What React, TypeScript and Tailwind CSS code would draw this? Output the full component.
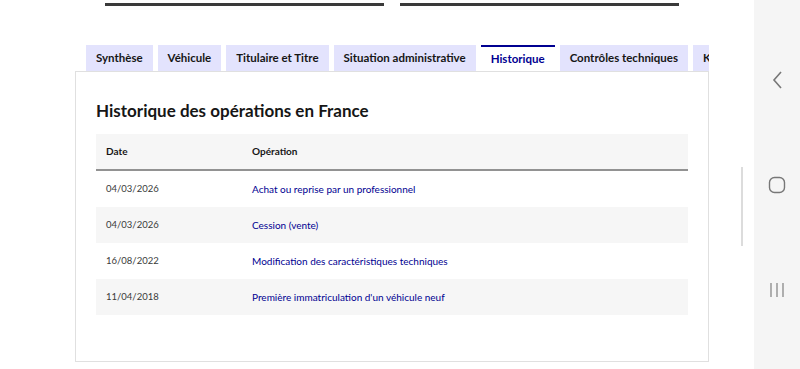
import React from "react";

const tabs = [
  "Synthèse",
  "Véhicule",
  "Titulaire et Titre",
  "Situation administrative",
  "Historique",
  "Contrôles techniques",
  "Kilométrage",
];

const rows = [
  ["04/03/2026", "Achat ou reprise par un professionnel"],
  ["04/03/2026", "Cession (vente)"],
  ["16/08/2022", "Modification des caractéristiques techniques"],
  ["11/04/2018", "Première immatriculation d'un véhicule neuf"],
];

export default function App() {
  return (
    <div
      className="flex w-[800px] h-[369px] overflow-hidden bg-white"
      style={{ fontFamily: "Lato, 'Open Sans', sans-serif" }}
    >
      <div className="relative w-[754px] shrink-0">
        <div className="flex gap-[16px] pl-[105px] pt-[3px]">
          <div className="w-[279px] h-[3px] bg-[#3a3a3a]" />
          <div className="w-[279px] h-[3px] bg-[#3a3a3a]" />
        </div>

        <div className="ml-[75px] mt-[39px] w-[634px] overflow-hidden pl-[11px]">
          <div className="flex gap-[5px] h-[26px] items-stretch whitespace-nowrap">
            {tabs.map((t) =>
              t === "Historique" ? (
                <div
                  key={t}
                  className="flex items-center px-[10px] bg-white border-t-2 border-[#000091] text-[#000091] text-[11.5px] font-bold"
                >
                  {t}
                </div>
              ) : (
                <div
                  key={t}
                  className="flex items-center px-[10px] bg-[#e3e3fd] text-[#161616] text-[11.5px] font-bold"
                >
                  {t}
                </div>
              )
            )}
          </div>
        </div>

        <div className="ml-[75px] w-[634px] h-[291px] border border-[#e0e0e0] px-[20px] pt-[26px]">
          <h2 className="text-[17px] font-bold text-[#161616] leading-[26px]">
            Historique des opérations en France
          </h2>
          <div className="mt-[10px] w-[592px]">
            <div className="flex h-[37px] items-center bg-[#f6f6f6] border-b-2 border-[#929292] text-[10px] font-bold text-[#161616]">
              <div className="w-[156px] pl-[10px]">Date</div>
              <div>Opération</div>
            </div>
            {rows.map(([d, op], i) => (
              <div
                key={i}
                className={`flex h-[36px] items-center ${
                  i % 2 === 1 ? "bg-[#f6f6f6]" : "bg-white"
                }`}
              >
                <div className="w-[156px] pl-[10px] text-[9.5px] text-[#3a3a3a]">{d}</div>
                <div className="text-[10px] text-[#000091]">{op}</div>
              </div>
            ))}
          </div>
        </div>

        <div className="absolute left-[741px] top-[167px] w-[2px] h-[79px] bg-[#dcdcdc]" />
      </div>

      <div className="flex-1 bg-[#f5f5f5] flex flex-col items-center">
        <svg width="12" height="20" viewBox="0 0 12 20" className="mt-[70px] ml-[2px]">
          <polyline points="9,2 2,10 9,18" fill="none" stroke="#777" strokeWidth="1.6" />
        </svg>
        <svg width="18" height="18" viewBox="0 0 18 18" className="mt-[86px]">
          <rect x="1.5" y="1.5" width="15" height="15" rx="5" fill="none" stroke="#777" strokeWidth="1.4" />
        </svg>
        <svg width="18" height="18" viewBox="0 0 18 18" className="mt-[87px]">
          <line x1="3" y1="2" x2="3" y2="16" stroke="#888" strokeWidth="1.3" />
          <line x1="9" y1="2" x2="9" y2="16" stroke="#888" strokeWidth="1.3" />
          <line x1="15" y1="2" x2="15" y2="16" stroke="#888" strokeWidth="1.3" />
        </svg>
      </div>
    </div>
  );
}
